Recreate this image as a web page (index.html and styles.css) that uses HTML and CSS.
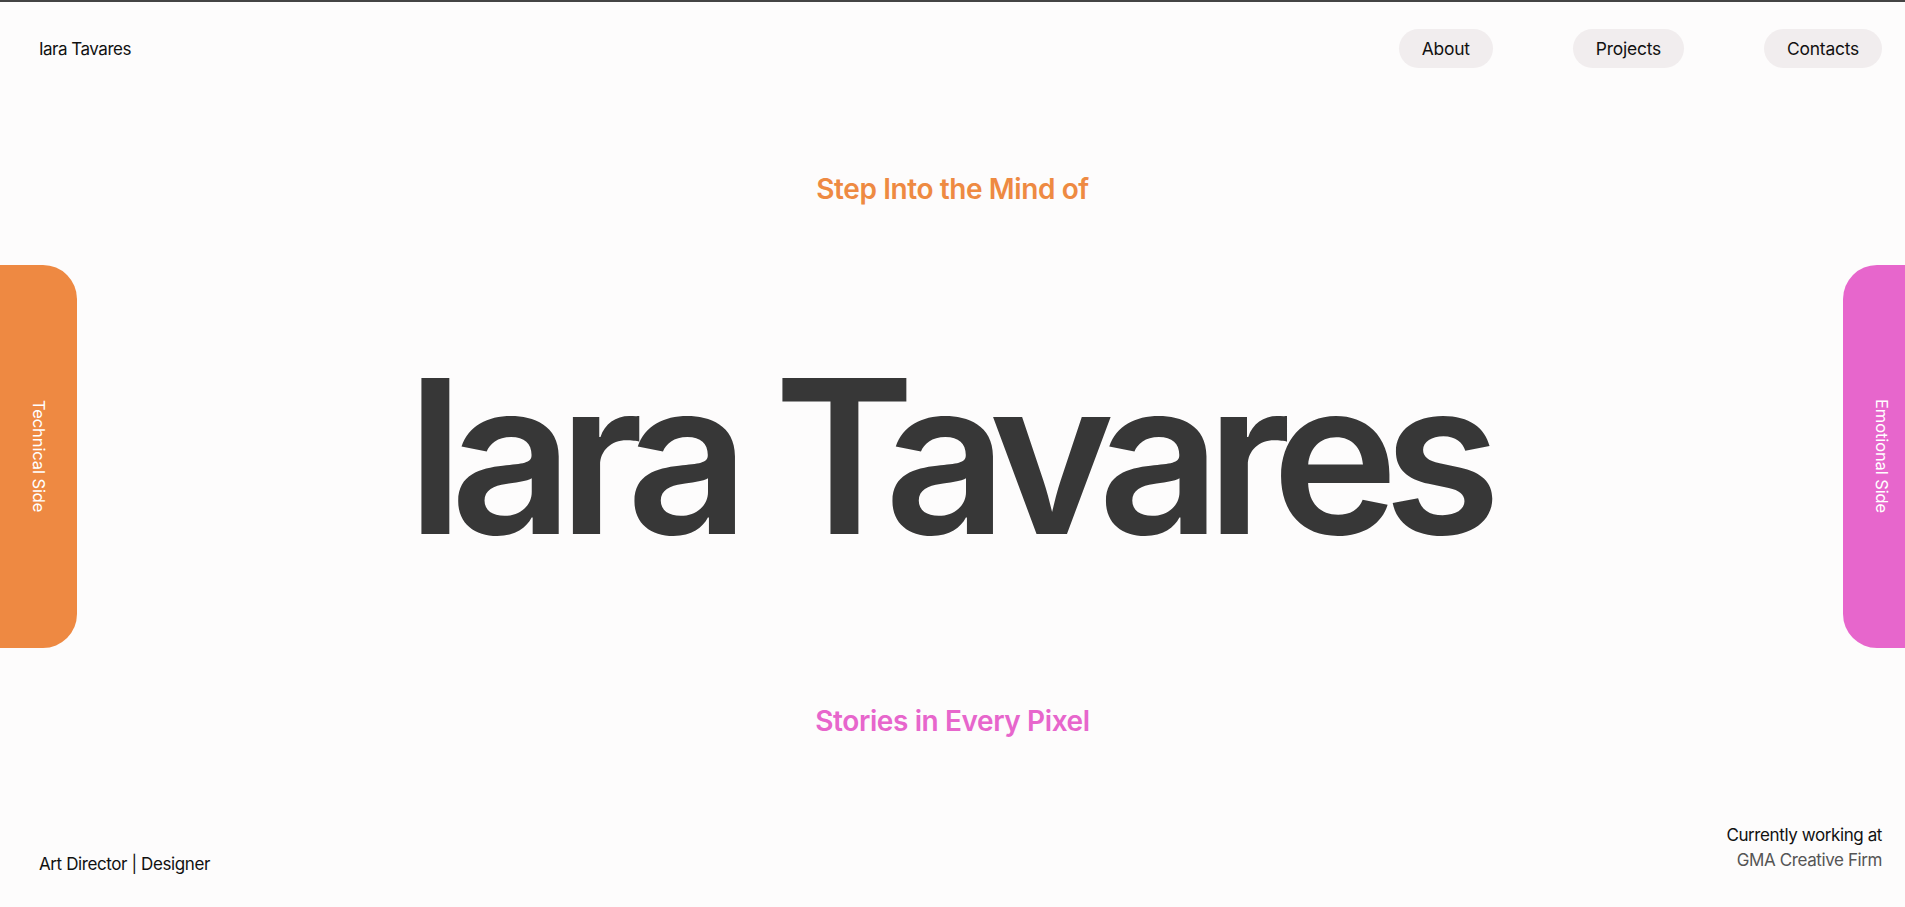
FILE: index.html
```html
<!DOCTYPE html>
<html lang="en">
<head>
<meta charset="utf-8">
<title>Iara Tavares</title>
<link rel="stylesheet" href="styles.css">
</head>
<body>
<div class="page">
  <header class="header">
    <div class="brand">Iara Tavares</div>
    <nav class="nav">
      <a class="pill" href="#">About</a>
      <a class="pill" href="#">Projects</a>
      <a class="pill" href="#">Contacts</a>
    </nav>
  </header>

  <main class="hero">
    <p class="tagline tagline-top">Step Into the Mind of</p>
    <div class="stage">
      <div class="tab tab-left"><span class="tab-label">Technical Side</span></div>
      <h1 class="name">Iara Tavares</h1>
      <div class="tab tab-right"><span class="tab-label">Emotional Side</span></div>
    </div>
    <p class="tagline tagline-bottom">Stories in Every Pixel</p>
  </main>

  <footer class="footer">
    <div class="role">Art Director | Designer</div>
    <div class="work">
      <div class="work-label">Currently working at</div>
      <div class="work-place">GMA Creative Firm</div>
    </div>
  </footer>
</div>
</body>
</html>
```

FILE: styles.css
```css
* { box-sizing: border-box; }

html, body {
  margin: 0;
  padding: 0;
}

body {
  background: #fdfcfc;
  font-family: Inter, "Noto Sans", sans-serif;
  color: #111;
  overflow: hidden;
}

.page {
  height: 907px;
  border-top: 2px solid #444;
  display: flex;
  flex-direction: column;
}

.header {
  display: flex;
  justify-content: space-between;
  align-items: center;
  padding: 27px 23px 0 39px;
}

.brand {
  font-size: 17px;
  letter-spacing: -0.5px;
  line-height: 22px;
  color: #111;
}

.nav {
  display: flex;
  gap: 80px;
}

.pill {
  display: block;
  background: #f1edee;
  color: #111;
  text-decoration: none;
  font-size: 17.4px;
  letter-spacing: -0.2px;
  line-height: 23px;
  padding: 8px 23px;
  border-radius: 20px;
}

.hero {
  display: flex;
  flex-direction: column;
  align-items: stretch;
}

.tagline {
  margin: 0;
  text-align: center;
  font-size: 28px;
  line-height: 32px;
  font-weight: 600;
  letter-spacing: -0.4px;
}

.tagline-top {
  color: #ee8a42;
  margin-top: 105px;
}

.tagline-bottom {
  color: #e766cc;
  margin-top: 57px;
}

.stage {
  margin-top: 60px;
  display: flex;
  align-items: center;
  justify-content: space-between;
  margin-right: -15px;
}

.tab {
  width: 77px;
  height: 383px;
  display: flex;
  align-items: center;
  justify-content: center;
  color: #fff;
}

.tab-left {
  background: #ee8942;
  border-radius: 0 34px 34px 0;
}

.tab-right {
  background: #e766cc;
  border-radius: 34px 0 0 34px;
}

.tab-label {
  writing-mode: vertical-rl;
  font-size: 16.5px;
  letter-spacing: -0.1px;
}

.name {
  margin: 0;
  padding-right: 28px;
  font-size: 214px;
  line-height: 1;
  font-weight: 600;
  color: #373737;
  letter-spacing: -14.8px;
  text-align: center;
  white-space: nowrap;
}

.footer {
  margin-top: auto;
  display: flex;
  justify-content: space-between;
  align-items: flex-end;
  padding: 0 23px 32px 39px;
}

.role {
  font-size: 17px;
  line-height: 22px;
  letter-spacing: -0.4px;
  color: #111;
}

.work {
  text-align: right;
  font-size: 17px;
  line-height: 25px;
  letter-spacing: -0.4px;
  margin-bottom: 2px;
}

.work-label { color: #111; }
.work-place { color: #555; }
```
